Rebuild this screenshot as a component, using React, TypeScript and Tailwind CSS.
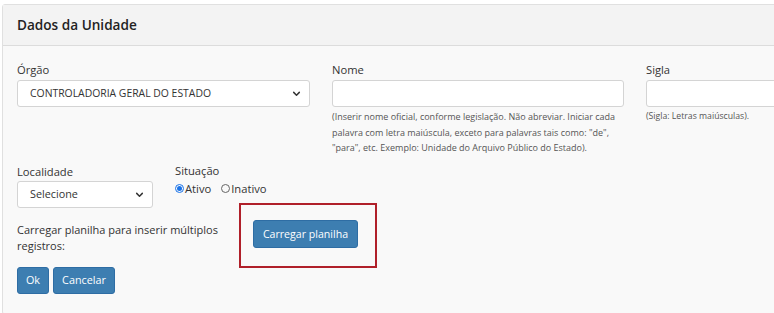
import React from 'react';

const Chevron = () => (
  <svg width="9" height="9" viewBox="0 0 16 16" fill="none" stroke="#333" strokeWidth="2.6" strokeLinecap="round" strokeLinejoin="round">
    <path d="M3 6l5 5 5-5" />
  </svg>
);

const App: React.FC = () => {
  return (
    <div className="w-[774px] h-[313px] overflow-hidden bg-white font-['Open_Sans',sans-serif] text-[#333]">
      <div className="ml-[2px] mt-[4px] w-[960px] border border-[#e0e0e0] rounded-[3px] bg-[#f9f9f9]">
        <div className="h-[41px] bg-[#f3f3f3] border-b border-[#dcdcdc] px-[14px] flex items-center">
          <h2 className="text-[13.6px] font-semibold text-[#222]">Dados da Unidade</h2>
        </div>

        <div className="px-[14px] pt-[16px] pb-[20px]">
          <div className="flex gap-[22px]">
            <div className="w-[293px]">
              <label className="block text-[11.2px] leading-[16px] mb-[2px]">Órgão</label>
              <div className="h-[27px] bg-white border border-[#d4d4d4] rounded-[3px] flex items-center justify-between pl-[12px] pr-[8px]">
                <span className="text-[10.4px]">CONTROLADORIA GERAL DO ESTADO</span>
                <Chevron />
              </div>
            </div>
            <div className="w-[292px]">
              <label className="block text-[11.2px] leading-[16px] mb-[2px]">Nome</label>
              <div className="h-[27px] bg-white border border-[#d4d4d4] rounded-[3px]" />
              <p className="mt-[2px] text-[9px] leading-[15.5px] text-[#555]">
                (Inserir nome oficial, conforme legislação. Não abreviar. Iniciar cada palavra com letra maiúscula, exceto para palavras tais como: "de", "para", etc. Exemplo: Unidade do Arquivo Público do Estado).
              </p>
            </div>
            <div className="w-[292px]">
              <label className="block text-[11.2px] leading-[16px] mb-[2px]">Sigla</label>
              <div className="h-[27px] bg-white border border-[#d4d4d4] rounded-[3px]" />
              <p className="mt-[2px] text-[8.7px] leading-[15.5px] text-[#555]">(Sigla: Letras maiúsculas).</p>
            </div>
          </div>

          <div className="flex gap-[22px] mt-[8px]">
            <div className="w-[136px]">
              <label className="block text-[11.2px] leading-[16px] mb-[1px]">Localidade</label>
              <div className="h-[27px] bg-white border border-[#d4d4d4] rounded-[3px] flex items-center justify-between pl-[12px] pr-[8px]">
                <span className="text-[10.8px]">Selecione</span>
                <Chevron />
              </div>
            </div>
            <div className="-mt-[1px]">
              <label className="block text-[11.2px] leading-[16px] mb-[2px]">Situação</label>
              <div className="flex items-center text-[11.2px] leading-[16px]">
                <span className="w-[9px] h-[9px] rounded-full border border-[#1a73e8] flex items-center justify-center mr-[1px]">
                  <span className="w-[5px] h-[5px] rounded-full bg-[#1a73e8]" />
                </span>
                <span>Ativo</span>
                <span className="w-[9px] h-[9px] rounded-full border border-[#666] ml-[10px] mr-[1px]" />
                <span>Inativo</span>
              </div>
            </div>
          </div>

          <div className="flex items-start">
            <p className="w-[215px] mt-[14px] text-[11px] leading-[16px]">Carregar planilha para inserir múltiplos registros:</p>
            <div className="ml-[7px] -mt-[5px] w-[138px] h-[65px] border-2 border-[#b0202a] pl-[12px] pt-[15px]">
              <button className="h-[28px] w-[105px] bg-[#3d7eb1] border border-[#2e6da4] rounded-[3px] text-white text-[10.6px]">Carregar planilha</button>
            </div>
          </div>

          <div className="flex gap-[4px] -mt-[1px]">
            <button className="h-[27px] w-[32px] bg-[#3d7eb1] border border-[#2e6da4] rounded-[3px] text-white text-[10.8px]">Ok</button>
            <button className="h-[27px] w-[62px] bg-[#3d7eb1] border border-[#2e6da4] rounded-[3px] text-white text-[10.8px]">Cancelar</button>
          </div>
        </div>
      </div>
    </div>
  );
};

export default App;
